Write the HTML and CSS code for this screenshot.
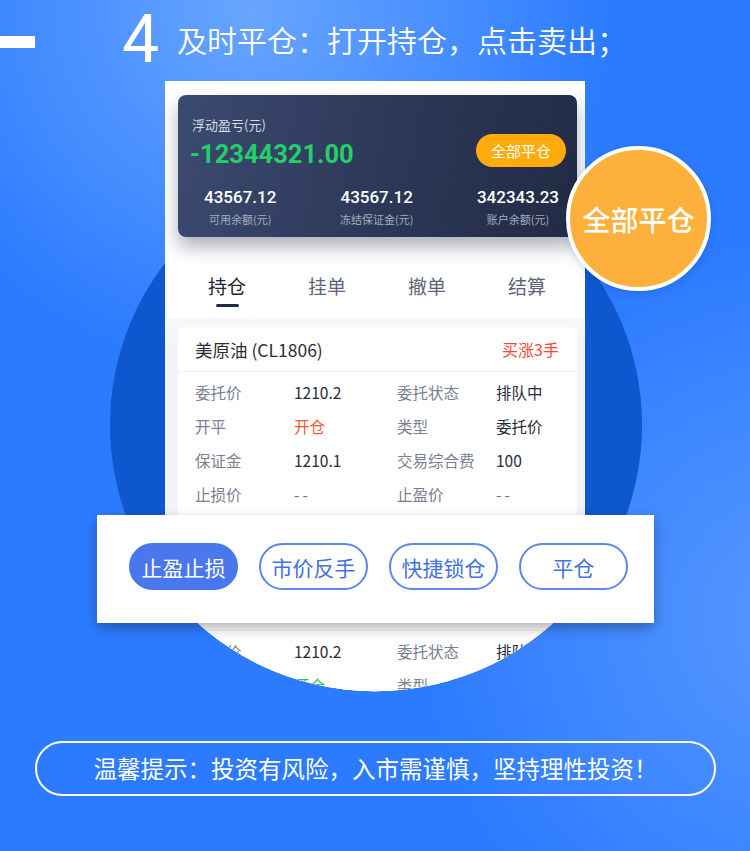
FILE: index.html
```html
<!DOCTYPE html>
<html lang="zh-CN">
	<head>
		<meta charset="utf-8">
		<title>及时平仓</title>
		<link rel="stylesheet" href="styles.css">
	</head>
	<body>
		<div class="poster">
			<header class="headline">
				<span class="dash"></span>
				<span class="step">4</span>
				<h1 class="title">及时平仓：打开持仓，点击卖出；</h1>
			</header>

			<div class="disc"></div>

			<div class="phone">
				<div class="account">
					<div class="account-top">
						<div>
							<div class="float-label">浮动盈亏(元)</div>
							<div class="float-value">-12344321.00</div>
						</div>
						<button class="close-all">全部平仓</button>
					</div>
					<div class="stats">
						<div class="stat">
							<div class="stat-num">43567.12</div>
							<div class="stat-label">可用余额(元)</div>
						</div>
						<div class="stat">
							<div class="stat-num">43567.12</div>
							<div class="stat-label">冻结保证金(元)</div>
						</div>
						<div class="stat">
							<div class="stat-num">342343.23</div>
							<div class="stat-label">账户余额(元)</div>
						</div>
					</div>
				</div>

				<nav class="tabs">
					<div class="tab active">持仓<span class="bar"></span></div>
					<div class="tab">挂单</div>
					<div class="tab">撤单</div>
					<div class="tab">结算</div>
				</nav>

				<div class="list">
					<div class="order">
						<div class="order-head">
							<span class="name">美原油 (CL1806)</span>
							<span class="side">买涨3手</span>
						</div>
						<div class="order-rows">
							<span class="k">委托价</span><span class="v">1210.2</span><span class="k">委托状态</span><span class="v">排队中</span>
							<span class="k">开平</span><span class="v red">开仓</span><span class="k">类型</span><span class="v">委托价</span>
							<span class="k">保证金</span><span class="v">1210.1</span><span class="k">交易综合费</span><span class="v">100</span>
							<span class="k">止损价</span><span class="v dash-v">--</span><span class="k">止盈价</span><span class="v dash-v">--</span>
						</div>
						<div class="order-actions">
							<span class="mini fill">止盈止损</span>
							<span class="mini">市价反手</span>
							<span class="mini">快捷锁仓</span>
							<span class="mini">平仓</span>
						</div>
					</div>

					<div class="order">
						<div class="order-head">
							<span class="name">美原油 (CL1806)</span>
							<span class="side">买涨3手</span>
						</div>
						<div class="order-rows">
							<span class="k">委托价</span><span class="v">1210.2</span><span class="k">委托状态</span><span class="v">排队中</span>
							<span class="k">开平</span><span class="v green">开仓</span><span class="k">类型</span><span class="v">委托价</span>
						</div>
					</div>
				</div>
			</div>

			<div class="badge">全部平仓</div>

			<div class="action-bar">
				<button class="pill fill">止盈止损</button>
				<button class="pill">市价反手</button>
				<button class="pill">快捷锁仓</button>
				<button class="pill">平仓</button>
			</div>

			<div class="notice">温馨提示：投资有风险，入市需谨慎，坚持理性投资！</div>
		</div>
	</body>
</html>
```

FILE: styles.css
```css
body {
	margin: 0;
	padding: 0;
	font-family: "Noto Sans CJK SC", "Noto Sans", sans-serif;
}

.poster {
	position: relative;
	width: 750px;
	height: 851px;
	overflow: hidden;
	background:
		radial-gradient(circle at 250px 10px, rgba(104, 165, 255, 1) 0, rgba(104, 165, 255, 0) 360px),
		radial-gradient(circle at 800px 620px, rgba(88, 152, 255, 1) 0, rgba(88, 152, 255, 0) 380px),
		#2c7bff;
}

/* header */
.headline {
	display: flex;
	align-items: flex-start;
	height: 81px;
	color: #ffffff;
}

.dash {
	width: 35px;
	height: 12px;
	margin-top: 36px;
	background: #ffffff;
}

.step {
	margin: 1px 0 0 87px;
	font-family: Roboto, sans-serif;
	font-size: 66px;
	line-height: normal;
	font-weight: 400;
}

.title {
	margin: 24px 0 0 18px;
	font-size: 30px;
	line-height: 30px;
	font-weight: 350;
}

/* background disc */
.disc {
	position: absolute;
	left: 110px;
	top: 159px;
	width: 532px;
	height: 532px;
	border-radius: 50%;
	background: #0e57cf;
	z-index: 0;
}

/* phone screen */
.phone {
	position: relative;
	z-index: 1;
	width: 420px;
	height: 620px;
	margin-left: 165px;
	background: #ffffff;
	overflow: hidden;
	clip-path: path("M0 0 H420 V508 A266 266 0 0 1 0 507 Z");
}

.account {
	box-sizing: border-box;
	width: 399px;
	height: 142px;
	margin: 14px 0 0 13px;
	padding: 21px 11px 0 14px;
	border-radius: 8px;
	background: linear-gradient(100deg, #3b4a70 0%, #2b3757 55%, #222b45 100%);
	box-shadow: 0 10px 18px rgba(25, 35, 65, 0.35);
}

.account-top {
	display: flex;
	justify-content: space-between;
	align-items: flex-end;
}

.float-label {
	font-size: 13px;
	line-height: 18px;
	color: #d6dbe7;
}

.float-value {
	margin: 5px 0 0 -2px;
	font-family: Roboto, sans-serif;
	font-size: 25.5px;
	line-height: 30px;
	font-weight: 700;
	color: #24cf68;
}

.close-all {
	width: 90px;
	height: 33px;
	margin-bottom: 2px;
	border: none;
	border-radius: 17px;
	background: #ffab0e;
	color: #ffffff;
	font-family: inherit;
	font-size: 15px;
}

.stats {
	display: flex;
	justify-content: space-between;
	margin: 17px 7px 0 12px;
}

.stat {
	text-align: center;
}

.stat-num {
	font-family: Roboto, sans-serif;
	font-size: 17px;
	line-height: 22px;
	font-weight: 500;
	color: #ffffff;
}

.stat-label {
	margin-top: 3px;
	font-size: 11px;
	line-height: 16px;
	color: #a4acbf;
}

/* tabs */
.tabs {
	display: flex;
	margin: 36px 0 0 12px;
}

.tab {
	width: 100px;
	font-size: 19px;
	line-height: 26px;
	color: #5e6576;
	text-align: center;
}

.tab.active {
	color: #1d2436;
}

.tab .bar {
	display: block;
	width: 23px;
	height: 3px;
	margin: 5px auto 0;
	border-radius: 2px;
	background: #1f2a44;
}

/* order list */
.list {
	margin-top: 10px;
	padding: 10px 8px 0 13px;
	background: linear-gradient(#f8f9fc, #f1f4fa 30px);
	height: 400px;
}

.order {
	margin-bottom: 10px;
	border-radius: 6px;
	background: #ffffff;
}

.order-head {
	box-sizing: border-box;
	display: flex;
	justify-content: space-between;
	align-items: center;
	height: 45px;
	padding: 0 18px 0 17px;
	border-bottom: 1px solid #eef0f5;
}

.name {
	font-size: 17.5px;
	color: #2a2e39;
}

.side {
	font-size: 16px;
	color: #f24a33;
}

.order-rows {
	display: grid;
	grid-template-columns: 99px 103px 99px auto;
	grid-auto-rows: 34px;
	align-items: center;
	padding: 3px 0 0 17px;
	font-size: 15.5px;
}

.k {
	color: #7a8091;
}

.v {
	color: #272c3a;
}

.v.red {
	color: #f3553a;
}

.v.green {
	color: #2ec266;
}

.dash-v {
	letter-spacing: 3px;
	color: #6d7384;
}

.order-actions {
	display: flex;
	align-items: center;
	justify-content: flex-end;
	gap: 8px;
	height: 65px;
	padding-right: 12px;
}

.mini {
	padding: 4px 10px;
	border: 1px solid #5b87ef;
	border-radius: 14px;
	font-size: 12px;
	color: #4471e6;
}

.mini.fill {
	background: #4a78ec;
	color: #ffffff;
}

/* overlays */
.badge {
	position: absolute;
	left: 566px;
	top: 146px;
	z-index: 3;
	box-sizing: border-box;
	display: flex;
	align-items: center;
	justify-content: center;
	width: 145px;
	height: 145px;
	border: 4px solid #ffffff;
	border-radius: 50%;
	background: #fdb03b;
	color: #ffffff;
	font-size: 28px;
	font-weight: 500;
	box-shadow: 0 2px 8px rgba(0, 40, 120, 0.2);
}

.action-bar {
	position: absolute;
	left: 97px;
	top: 515px;
	z-index: 2;
	box-sizing: border-box;
	display: flex;
	align-items: flex-start;
	gap: 21px;
	width: 557px;
	height: 108px;
	padding: 28px 0 0 32px;
	background: #ffffff;
	box-shadow: 0 5px 12px rgba(0, 0, 0, 0.3);
}

.pill {
	box-sizing: border-box;
	width: 109px;
	height: 47px;
	border: 2px solid #5b87ef;
	border-radius: 24px;
	background: #ffffff;
	color: #4471e6;
	font-family: inherit;
	font-size: 21px;
	padding: 0;
}

.pill.fill {
	border-color: #4a78ec;
	background: #4a78ec;
	color: #ffffff;
}

/* footer notice */
.notice {
	box-sizing: border-box;
	width: 681px;
	height: 55px;
	margin: 40px 0 0 35px;
	border: 2px solid #ffffff;
	border-radius: 28px;
	color: #ffffff;
	font-size: 23.5px;
	line-height: 51px;
	text-align: center;
}
```
